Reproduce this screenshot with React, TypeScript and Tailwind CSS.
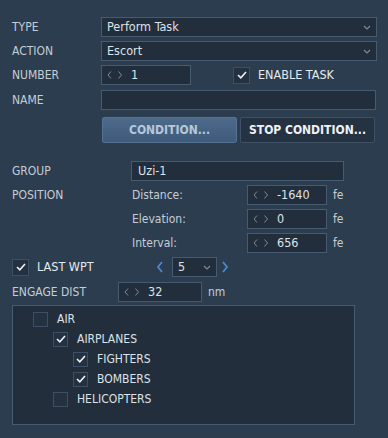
import type { ReactNode } from 'react';

const font = { fontFamily: '"DejaVu Sans Condensed", "DejaVu Sans", Verdana, sans-serif', fontStretch: 'condensed' };

function Chevron({ dir, className }: { dir: 'left' | 'right' | 'down'; className?: string }) {
	const d =
		dir === 'left' ? 'M5 1 L1 6 L5 11' : dir === 'right' ? 'M1 1 L5 6 L1 11' : 'M1 1 L4 4 L7 1';
	const size = dir === 'down' ? { w: 8, h: 5 } : { w: 6, h: 12 };
	return (
		<svg
			width={size.w}
			height={size.h}
			viewBox={`0 0 ${size.w} ${size.h}`}
			className={className}
			fill="none"
			stroke="currentColor"
			strokeWidth={dir === 'down' ? 1.1 : 1.8}
		>
			<path d={d} />
		</svg>
	);
}

function Select({ value, className }: { value: string; className: string }) {
	return (
		<div
			className={`flex h-[20px] items-center justify-between border border-[#465b71] bg-[#222e3b] pr-[5px] pl-[5px] text-[12.5px] text-[#dde3ea] ${className}`}
		>
			<span>{value}</span>
			<Chevron dir="down" className="text-[#7d8b9a]" />
		</div>
	);
}

function Spin({ value, className }: { value: string; className: string }) {
	return (
		<div
			className={`flex h-[20px] items-center border border-[#465b71] bg-[#222e3b] pl-[5px] text-[12.5px] text-[#dde3ea] ${className}`}
		>
			<svg width="16" height="8" viewBox="0 0 16 8" fill="none" stroke="#7d8b9a" strokeWidth="1">
				<path d="M4 0.5 L1 4 L4 7.5" />
				<path d="M11.5 0.5 L14.5 4 L11.5 7.5" />
			</svg>
			<span className="ml-[8px]">{value}</span>
		</div>
	);
}

function Check({ checked, size = 'w-[16px] h-[16px]' }: { checked: boolean; size?: string }) {
	return (
		<div
			className={`flex shrink-0 items-center justify-center border border-[#3d4f64] bg-[#243140] ${size}`}
		>
			{checked && (
				<svg width="10" height="8" viewBox="0 0 10 8" fill="none" stroke="#eef2f6" strokeWidth="1.6">
					<path d="M1 4 L3.8 6.8 L9 1" />
				</svg>
			)}
		</div>
	);
}

function Label({ children, className }: { children: ReactNode; className: string }) {
	return <div className={`shrink-0 text-[12px] text-[#c5cdd6] ${className}`}>{children}</div>;
}

function TreeItem({ indent, checked, label }: { indent: string; checked: boolean; label: string }) {
	return (
		<div className={`flex h-[20px] items-center ${indent}`}>
			<Check checked={checked} size="w-[15px] h-[15px]" />
			<span className="ml-[9px] text-[12px] text-[#dde3ea]">{label}</span>
		</div>
	);
}

export default function App() {
	return (
		<div className="h-[438px] w-[388px] overflow-hidden bg-[#2c3d4f] pt-[17px] pl-[12px]" style={font}>
			<div className="flex items-center">
				<Label className="w-[89px]">TYPE</Label>
				<Select value="Perform Task" className="w-[276px]" />
			</div>
			<div className="mt-[4px] flex items-center">
				<Label className="w-[89px]">ACTION</Label>
				<Select value="Escort" className="w-[276px]" />
			</div>
			<div className="mt-[4px] flex items-center">
				<Label className="w-[89px]">NUMBER</Label>
				<Spin value="1" className="w-[90px]" />
				<div className="ml-[42px]">
					<Check checked size="w-[17px] h-[17px]" />
				</div>
				<span className="ml-[8px] text-[12.5px] text-[#e6ebf0]">ENABLE TASK</span>
			</div>
			<div className="mt-[5px] flex items-center">
				<Label className="w-[89px]">NAME</Label>
				<div className="h-[20px] w-[275px] border border-[#465b71] bg-[#222e3b]" />
			</div>
			<div className="mt-[7px] flex gap-[3px] pl-[90px]">
				<button className="h-[26px] w-[135px] rounded-[2px] border border-[#557292] bg-gradient-to-b from-[#4d6a8b] to-[#3f5a7a] text-[12px] font-bold text-[#b7c8db]">
					CONDITION...
				</button>
				<button className="h-[26px] w-[135px] rounded-[2px] border border-[#3e5166] bg-[#243242] text-[12px] font-bold text-[#eef2f6]">
					STOP CONDITION...
				</button>
			</div>

			<div className="mt-[18px] flex items-center">
				<Label className="w-[119px]">GROUP</Label>
				<div className="flex h-[20px] w-[213px] items-center border border-[#465b71] bg-[#222e3b] pl-[6px] text-[12.5px] text-[#dde3ea]">
					Uzi-1
				</div>
			</div>
			<div className="mt-[4px] flex">
				<Label className="flex h-[20px] w-[120px] items-center">POSITION</Label>
				<div className="flex flex-col gap-[4px]">
					{[
						['Distance:', '-1640'],
						['Elevation:', '0'],
						['Interval:', '656']
					].map(([l, v]) => (
						<div key={l} className="flex items-center whitespace-nowrap">
							<Label className="w-[115px]">{l}</Label>
							<Spin value={v} className="w-[80px] shrink-0" />
							<span className="ml-[6px] text-[12px] text-[#c5cdd6]">fe</span>
						</div>
					))}
				</div>
			</div>

			<div className="mt-[4px] flex h-[20px] items-center">
				<div className="flex w-[145px] items-center">
					<Check checked size="w-[17px] h-[17px]" />
					<span className="ml-[8px] text-[12.5px] text-[#e6ebf0]">LAST WPT</span>
				</div>
				<div className="flex w-[15px] items-center">
					<Chevron dir="left" className="text-[#4f86cc]" />
				</div>
				<Select value="5" className="w-[45px]" />
				<div className="ml-[5px] flex items-center">
					<Chevron dir="right" className="text-[#4f86cc]" />
				</div>
			</div>
			<div className="mt-[5px] flex items-center">
				<Label className="w-[106px]">ENGAGE DIST</Label>
				<Spin value="32" className="w-[84px]" />
				<span className="ml-[6px] text-[12px] text-[#c5cdd6]">nm</span>
			</div>

			<div className="mt-[3px] h-[120px] w-[343px] border border-[#465b71] bg-[#222e3b] pt-[3px] pl-[20px]">
				<TreeItem indent="" checked={false} label="AIR" />
				<TreeItem indent="pl-[20px]" checked label="AIRPLANES" />
				<TreeItem indent="pl-[40px]" checked label="FIGHTERS" />
				<TreeItem indent="pl-[40px]" checked label="BOMBERS" />
				<TreeItem indent="pl-[20px]" checked={false} label="HELICOPTERS" />
			</div>
		</div>
	);
}
